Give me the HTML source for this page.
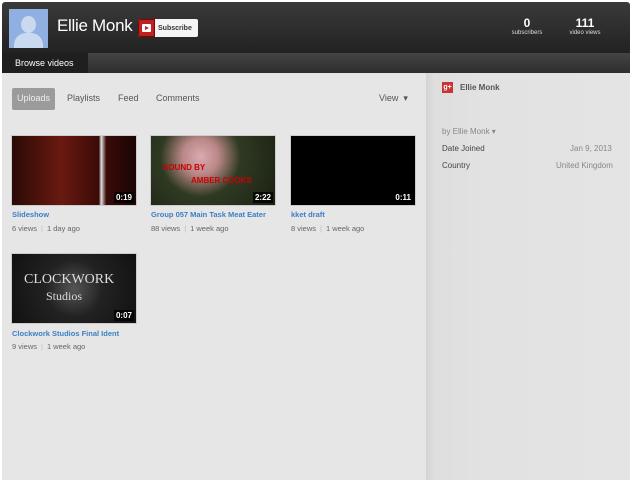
<!DOCTYPE html>
<html><head><style>
*{margin:0;padding:0;box-sizing:border-box}
body{width:633px;height:480px;background:#fff;font-family:"Liberation Sans",Arial,sans-serif;position:relative;overflow:hidden}
.hdr{position:absolute;left:2px;top:2px;width:628px;height:51px;background:linear-gradient(#3a3a3a,#222);border-radius:3px 3px 0 0}
.av{position:absolute;left:7px;top:7px;width:39px;height:39px;background:#8fb0e0;overflow:hidden}
.name{position:absolute;left:55px;top:14px;color:#fff;font-size:17px;letter-spacing:-0.3px}
.sub{position:absolute;left:136px;top:17px;height:18px;width:60px;background:#f5f5f5;border-radius:2px;font-size:7px;font-weight:bold;color:#333;display:flex;align-items:center;padding-left:20px}
.yt{position:absolute;left:0;top:0;width:17px;height:18px;background:#b22;border:1px solid #800;border-radius:2px 0 0 2px}
.yt:after{content:"";position:absolute;left:3px;top:4px;width:9px;height:8px;background:#fff;border-radius:1px}
.yt:before{content:"";position:absolute;left:6px;top:6px;z-index:2;border-left:4px solid #b22;border-top:2px solid transparent;border-bottom:2px solid transparent}
.stat{position:absolute;top:14px;color:#fff;text-align:center}
.stat b{display:block;font-size:12px}
.stat span{display:block;font-size:6px;color:#ddd}
.nav{position:absolute;left:2px;top:53px;width:628px;height:20px;background:linear-gradient(#444,#2e2e2e)}
.bv{position:absolute;left:0;top:0;width:86px;height:20px;background:#1f1f1f;color:#fff;font-size:9px;line-height:20px;padding-left:13px}
.left{position:absolute;left:2px;top:73px;width:424px;height:407px;background:#e6e6e6}
.right{position:absolute;left:426px;top:73px;width:204px;height:407px;background:linear-gradient(90deg,#d4d4d4,#dedede 8px,#e2e2e2 60px,#e4e4e4)}
.tab{position:absolute;top:88px;font-size:9px;color:#555;height:22px;line-height:20px}
.up{left:12px;width:43px;background:#9b9b9b;color:#eee;text-align:center;border-radius:2px}
.th{position:absolute;width:126px;height:71px;border:1px solid #ccc;overflow:hidden}
.dur{position:absolute;right:2px;bottom:2px;background:rgba(0,0,0,.75);color:#fff;font-size:8px;font-weight:bold;padding:1px 2px}
.t{position:absolute;font-size:7.5px;font-weight:bold;color:#3b7fc4}
.m{position:absolute;font-size:7.5px;color:#666}
.m i{color:#bbb;font-style:normal;margin:0 4px}
.r{position:absolute;font-size:8px;color:#444}
</style></head><body>
<div class="hdr">
 <div class="av"><div style="position:absolute;left:12px;top:7px;width:15px;height:17px;border-radius:50%;background:#c9d9f0"></div><div style="position:absolute;left:5px;top:24px;width:29px;height:20px;border-radius:12px 12px 0 0;background:#c9d9f0"></div></div>
 <div class="name">Ellie Monk</div>
 <div class="sub"><div class="yt"></div>Subscribe</div>
 <div class="stat" style="left:505px;width:40px"><b>0</b><span>subscribers</span></div>
 <div class="stat" style="left:562px;width:42px"><b>111</b><span>video views</span></div>
</div>
<div class="nav"><div class="bv">Browse videos</div></div>
<div class="left"></div>
<div class="right"></div>
<div class="tab up">Uploads</div>
<div class="tab" style="left:67px">Playlists</div>
<div class="tab" style="left:118px">Feed</div>
<div class="tab" style="left:156px">Comments</div>
<div class="tab" style="left:379px">View &nbsp;▾</div>

<div class="th" style="left:11px;top:135px;background:linear-gradient(90deg,#2a0a05,#6a1a10 40%,#3a0a08 70%,#ddd 72%,#3a0a08 76%,#1a0505)"><div class="dur">0:19</div></div>
<div class="th" style="left:150px;top:135px;background:radial-gradient(circle at 40% 30%,#d9aab0 0,#b88 20%,#2f3a22 45%,#1a2012)"><div style="position:absolute;left:12px;top:27px;color:#c00;font-size:8px;font-weight:bold">SOUND BY</div><div style="position:absolute;left:40px;top:40px;color:#c00;font-size:8px;font-weight:bold">AMBER COOKS</div><div class="dur">2:22</div></div>
<div class="th" style="left:290px;top:135px;background:#000"><div class="dur">0:11</div></div>
<div class="th" style="left:11px;top:253px;background:radial-gradient(circle,#555 0,#222 40%,#111)"><div style="position:absolute;left:12px;top:18px;color:#ddd;font-family:'Liberation Serif',serif;font-size:14px">CLOCKWORK</div><div style="position:absolute;left:34px;top:35px;color:#ddd;font-family:'Liberation Serif',serif;font-size:12px">Studios</div><div class="dur">0:07</div></div>

<div class="t" style="left:12px;top:210px">Slideshow</div>
<div class="m" style="left:12px;top:224px">6 views<i>|</i>1 day ago</div>
<div class="t" style="left:151px;top:210px">Group 057 Main Task Meat Eater</div>
<div class="m" style="left:151px;top:224px">88 views<i>|</i>1 week ago</div>
<div class="t" style="left:291px;top:210px">kket draft</div>
<div class="m" style="left:291px;top:224px">8 views<i>|</i>1 week ago</div>
<div class="t" style="left:12px;top:329px">Clockwork Studios Final Ident</div>
<div class="m" style="left:12px;top:342px">9 views<i>|</i>1 week ago</div>

<div style="position:absolute;left:442px;top:82px;width:11px;height:11px;background:#c33;color:#fff;font-size:7px;font-weight:bold;line-height:11px;text-align:center">g+</div>
<div class="r" style="left:460px;top:83px;font-weight:bold;color:#555">Ellie Monk</div>
<div class="r" style="left:442px;top:127px;color:#888">by Ellie Monk ▾</div>
<div class="r" style="left:442px;top:144px">Date Joined</div>
<div class="r" style="left:570px;top:144px;color:#888">Jan 9, 2013</div>
<div class="r" style="left:442px;top:161px">Country</div>
<div class="r" style="left:556px;top:161px;color:#888">United Kingdom</div>
</body></html>
